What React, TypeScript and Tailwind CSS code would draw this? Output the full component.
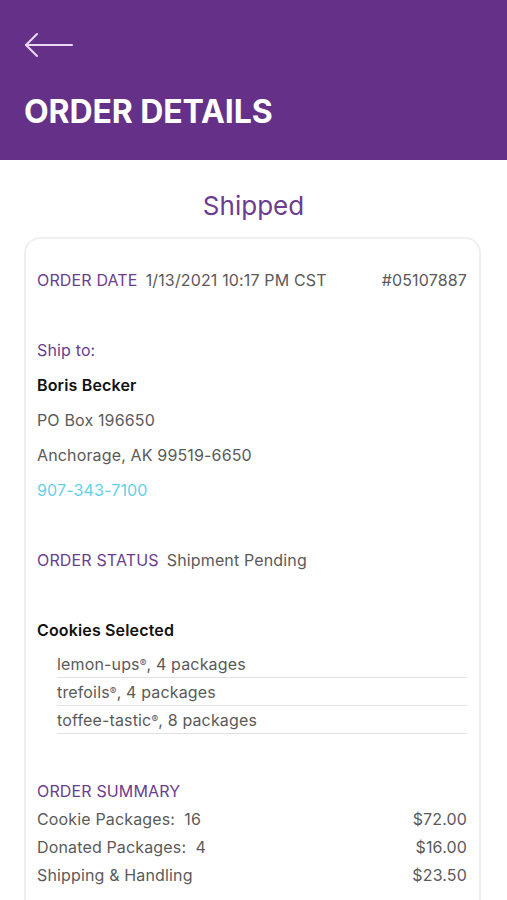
const PURPLE = "text-[#6b3d90]";

const cookies = [
  { name: "lemon-ups", qty: 4 },
  { name: "trefoils", qty: 4 },
  { name: "toffee-tastic", qty: 8 },
];

const summary = [
  { label: "Cookie Packages:  16", amount: "$72.00" },
  { label: "Donated Packages:  4", amount: "$16.00" },
  { label: "Shipping & Handling", amount: "$23.50" },
];

function BackArrow() {
  return (
    <svg width="50" height="26" viewBox="0 0 50 26" fill="none">
      <path d="M2 13H48" stroke="#ead9f5" strokeWidth="2" strokeLinecap="round" />
      <path d="M13 2L2 13L13 24" stroke="#ead9f5" strokeWidth="2" strokeLinecap="round" strokeLinejoin="round" />
    </svg>
  );
}

export default function App() {
  return (
    <div className="w-[507px] h-[900px] overflow-hidden bg-white font-['Inter',sans-serif]">
      <header className="h-[160px] bg-[#653188] px-6 pt-[32px]">
        <BackArrow />
        <h1 className="mt-[38px] text-[32px] font-bold leading-none text-white tracking-[-0.1px]">
          ORDER DETAILS
        </h1>
      </header>

      <div className="h-[77px] flex items-center justify-center pt-[14px]">
        <h2 className={`text-[26px] ${PURPLE} leading-none`}>Shipped</h2>
      </div>

      <div className="ml-6 mr-[26px] rounded-[16px] border-2 border-[#efefef] pl-[11px] pr-[12px] pt-[23px] pb-8 text-[16px] tracking-[0.15px] text-[#5a5a5a]">
        <div className="h-[35px] flex items-center">
          <span className={PURPLE}>ORDER DATE</span>
          <span className="ml-2">1/13/2021 10:17 PM CST</span>
          <span className="ml-auto">#05107887</span>
        </div>
        <div className="h-[35px]" />
        <div className={`h-[35px] flex items-center ${PURPLE}`}>Ship to:</div>
        <div className="h-[35px] flex items-center font-semibold text-[#111]">Boris Becker</div>
        <div className="h-[35px] flex items-center">PO Box 196650</div>
        <div className="h-[35px] flex items-center">Anchorage, AK 99519-6650</div>
        <div className="h-[35px] flex items-center text-[#5fd2e6]">907-343-7100</div>
        <div className="h-[35px]" />
        <div className="h-[35px] flex items-center">
          <span className={PURPLE}>ORDER STATUS</span>
          <span className="ml-2">Shipment Pending</span>
        </div>
        <div className="h-[35px]" />
        <div className="h-[35px] flex items-center font-semibold text-[#111]">Cookies Selected</div>
        <ul className="mt-[3px] ml-5">
          {cookies.map((c) => (
            <li key={c.name} className="h-[28px] flex items-center border-b border-[#e2e2e2] whitespace-pre">
              {c.name}
              <span className="text-[10px]">®</span>, {c.qty} packages
            </li>
          ))}
        </ul>
        <div className={`mt-[43px] h-[28px] flex items-center ${PURPLE}`}>ORDER SUMMARY</div>
        {summary.map((s) => (
          <div key={s.label} className="h-[28px] flex items-center justify-between">
            <span className="whitespace-pre">{s.label}</span>
            <span>{s.amount}</span>
          </div>
        ))}
      </div>
    </div>
  );
}
